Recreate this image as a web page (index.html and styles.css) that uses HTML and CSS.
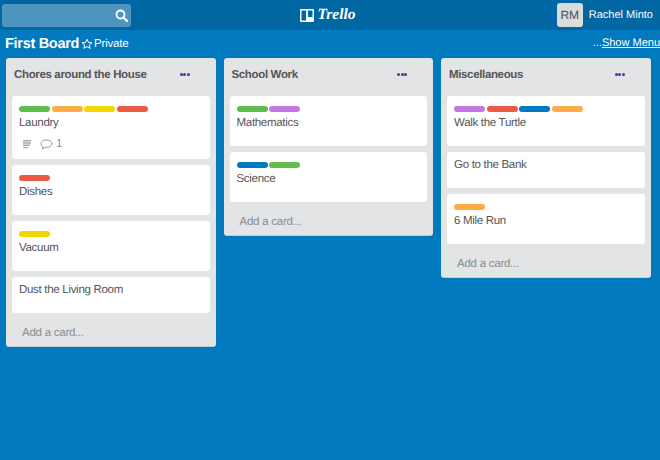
FILE: index.html
```html
<!DOCTYPE html>
<html lang="en">
<head>
    <meta charset="UTF-8">
    <title>First Board | Trello</title>
    <link rel="stylesheet" href="styles.css">
</head>
<body>
    <header class="top-bar">
        <div class="search-box">
            <svg class="search-icon" width="13" height="13" viewBox="0 0 13 13"><circle cx="5.5" cy="5.5" r="4" fill="none" stroke="#fff" stroke-width="1.8"/><path d="M8.5 8.5L12 12" stroke="#fff" stroke-width="2.2" stroke-linecap="round"/></svg>
        </div>
        <div class="logo">
            <svg width="14" height="13" viewBox="0 0 14 13"><path fill="#fff" fill-rule="evenodd" d="M1 0h12a1 1 0 0 1 1 1v11a1 1 0 0 1-1 1H1a1 1 0 0 1-1-1V1a1 1 0 0 1 1-1zm.5 1.500v10h4.500v-10zm6.500 0v6.500h4.500v-6.500z"/></svg>
            <span class="logo-text">Trello</span>
        </div>
        <div class="user">
            <span class="avatar">RM</span>
            <span class="user-name">Rachel Minto</span>
        </div>
    </header>

    <div class="board-header">
        <h1 class="board-title">First Board</h1>
        <svg class="star" width="12" height="12" viewBox="0 0 24 24"><path fill="none" stroke="#fff" stroke-width="2" stroke-linejoin="round" d="M12 2.5l2.9 6.4 7 .7-5.3 4.6 1.600 6.900L12 17l-6.200 3.600 1.600-6.900L2.100 9.600l7-.7z"/></svg>
        <span class="board-private">Private</span>
        <span class="show-menu">...<u>Show Menu</u></span>
    </div>

    <main class="lists">
        <section class="list">
            <div class="list-header">
                <h2>Chores around the House</h2>
                <span class="list-menu"><i></i><i></i><i></i></span>
            </div>
            <div class="card card-with-badges">
                <div class="labels"><span class="green"></span><span class="orange"></span><span class="yellow"></span><span class="red"></span></div>
                <div class="card-title">Laundry</div>
                <div class="badges">
                    <svg width="10" height="10" viewBox="0 0 10 10"><path fill="#a8a8a8" d="M1 1h8v1.400H1zM1 3.300h8v1.400H1zM1 5.600h7v1.400H1zM1 7.900h5v1.400H1z"/></svg>
                    <svg class="comment" width="13" height="11" viewBox="0 0 13 11"><path fill="none" stroke="#8c8c8c" stroke-width=".9" d="M6.500 1C3.500 1 1 2.600 1 4.700c0 1.200.8 2.200 2 2.900L2.500 10l2.700-1.700c.4.100.9.100 1.300.1 3 0 5.500-1.600 5.500-3.700S9.500 1 6.500 1z"/></svg>
                    <span>1</span>
                </div>
            </div>
            <div class="card">
                <div class="labels"><span class="red"></span></div>
                <div class="card-title">Dishes</div>
            </div>
            <div class="card">
                <div class="labels"><span class="yellow"></span></div>
                <div class="card-title">Vacuum</div>
            </div>
            <div class="card">
                <div class="card-title">Dust the Living Room</div>
            </div>
            <div class="add-card">Add a card...</div>
        </section>

        <section class="list">
            <div class="list-header">
                <h2>School Work</h2>
                <span class="list-menu"><i></i><i></i><i></i></span>
            </div>
            <div class="card">
                <div class="labels"><span class="green"></span><span class="purple"></span></div>
                <div class="card-title">Mathematics</div>
            </div>
            <div class="card">
                <div class="labels"><span class="blue"></span><span class="green"></span></div>
                <div class="card-title">Science</div>
            </div>
            <div class="add-card">Add a card...</div>
        </section>

        <section class="list">
            <div class="list-header">
                <h2>Miscellaneous</h2>
                <span class="list-menu"><i></i><i></i><i></i></span>
            </div>
            <div class="card">
                <div class="labels"><span class="purple"></span><span class="red"></span><span class="blue"></span><span class="orange"></span></div>
                <div class="card-title">Walk the Turtle</div>
            </div>
            <div class="card">
                <div class="card-title">Go to the Bank</div>
            </div>
            <div class="card">
                <div class="labels"><span class="orange"></span></div>
                <div class="card-title">6 Mile Run</div>
            </div>
            <div class="add-card">Add a card...</div>
        </section>
    </main>
</body>
</html>
```

FILE: styles.css
```css
body {
    font-family: "Liberation Sans", Arial, sans-serif;
    text-rendering: geometricPrecision;
    background-color: #0079bf;
    color: #555;
    margin: 0;
    height: 460px;
    overflow: hidden;
}

.top-bar {
    display: grid;
    grid-template-columns: 1fr auto 1fr;
    align-items: center;
    height: 30px;
    padding: 0 7px 0 2px;
    box-sizing: border-box;
    background-color: #0067a3;
}

.search-box {
    display: flex;
    justify-content: flex-end;
    align-items: center;
    width: 129px;
    height: 23px;
    padding-right: 2px;
    box-sizing: border-box;
    background-color: #4d95bf;
    border-radius: 3px;
}

.search-icon {
    margin-right: 1px;
}

.logo {
    display: flex;
    align-items: center;
    gap: 3px;
    margin-left: 1px;
    color: #fff;
}

.logo-text {
    font-family: "Liberation Serif", serif;
    font-size: 15.5px;
    font-style: italic;
    font-weight: bold;
    line-height: 16px;
}

.user {
    display: flex;
    justify-content: flex-end;
    align-items: center;
    gap: 6px;
}

.avatar {
    width: 26px;
    height: 24px;
    background-color: #dcdcdc;
    border-radius: 3px;
    color: #4d4d4d;
    font-size: 12px;
    line-height: 24px;
    text-align: center;
}

.user-name {
    color: #fff;
    font-size: 11px;
}

.board-header {
    display: flex;
    align-items: center;
    height: 28px;
    padding-left: 5px;
    color: #fff;
}

.board-title {
    margin: 0;
    font-size: 14.5px;
    letter-spacing: -.3px;
}

.star {
    margin: 0 1px 0 2px;
}

.board-private {
    font-size: 11.5px;
    letter-spacing: -.2px;
}

.show-menu {
    margin-left: auto;
    margin-top: -3px;
    font-size: 11px;
    white-space: nowrap;
}

.lists {
    display: flex;
    align-items: flex-start;
    gap: 8px;
    padding-left: 6px;
}

.list {
    width: 209.5px;
    padding: 0 6px;
    box-sizing: border-box;
    background-color: #e2e4e6;
    border-bottom: 1px solid #c4c9cc;
    border-radius: 3px;
}

.list-header {
    display: flex;
    align-items: center;
    height: 32px;
    padding: 0 20px 0 2px;
    margin-bottom: 6px;
}

.list-header h2 {
    margin: 0;
    padding-top: 1px;
    font-size: 11.5px;
    letter-spacing: -.35px;
    flex: 1;
}

.list-menu {
    display: flex;
    gap: .5px;
}

.list-menu i {
    width: 3px;
    height: 3px;
    background-color: #5a2d91;
    border-radius: 50%;
}

.card {
    padding: 3.5px 7px 14.5px;
    margin-bottom: 6px;
    background-color: #fff;
    border-radius: 3px;
}

.card-with-badges {
    padding-bottom: 8.5px;
}

.labels {
    display: flex;
    gap: 1.5px;
    padding-top: 6.5px;
    margin-bottom: 1.5px;
}

.labels span {
    width: 31px;
    height: 6px;
    border-radius: 3px;
}

.green { background-color: #61bd4f; }
.orange { background-color: #ffab4a; }
.yellow { background-color: #f2d600; }
.red { background-color: #eb5a46; }
.purple { background-color: #c377e0; }
.blue { background-color: #0079bf; }

.card-title {
    font-size: 11.5px;
    letter-spacing: -.3px;
    line-height: 18px;
}

.badges {
    display: flex;
    align-items: center;
    gap: 3px;
    height: 13px;
    margin: 6px 0 0 3px;
    color: #8c8c8c;
    font-size: 11.5px;
}

.comment {
    margin-left: 5px;
}

.add-card {
    height: 33px;
    padding-left: 10px;
    margin-top: -6px;
    color: #8c8c8c;
    font-size: 11.5px;
    letter-spacing: -.25px;
    line-height: 41px;
}
```
